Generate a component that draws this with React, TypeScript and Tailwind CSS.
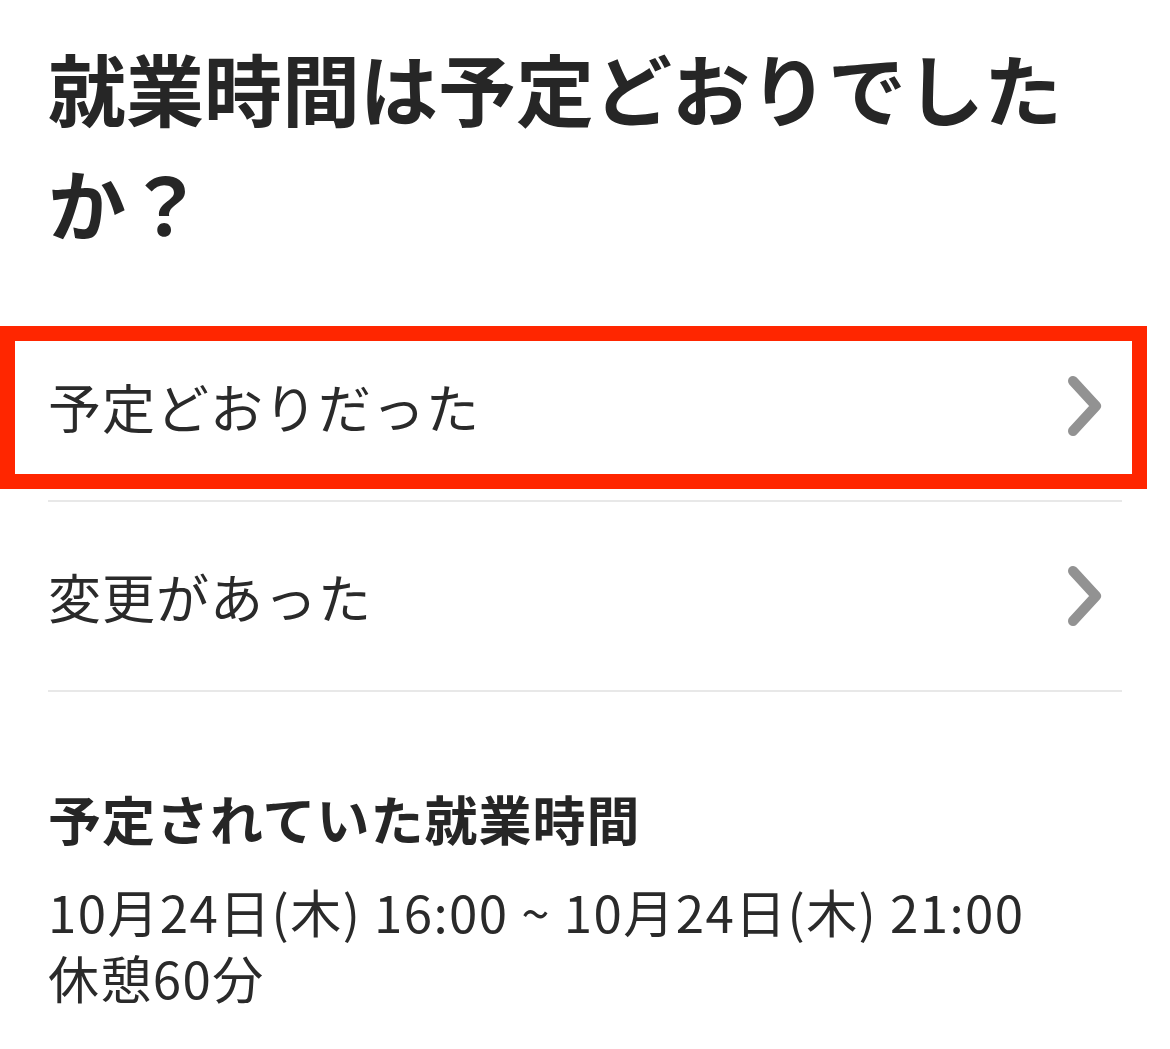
const jp = { fontFamily: '"Noto Sans CJK JP", "Noto Sans", sans-serif' }

function Chevron(): React.JSX.Element {
  return (
    <svg width="34" height="60" viewBox="0 0 34 60" fill="none" className="shrink-0">
      <path d="M5 5 L28 30 L5 55" stroke="#929292" strokeWidth="10" strokeLinecap="round" strokeLinejoin="round" />
    </svg>
  )
}

function OptionRow({ label }: { label: string }): React.JSX.Element {
  return (
    <button className="flex h-[190px] w-full items-center justify-between border-b-2 border-[#e8e8e8] pr-[20px] text-left">
      <span className="text-[53px] leading-none tracking-[1px] text-[#2a2a2a]">{label}</span>
      <Chevron />
    </button>
  )
}

export default function App(): React.JSX.Element {
  return (
    <div className="relative min-h-[1049px] w-[1170px] bg-white" style={jp}>
      <div className="pl-[48px] pr-[48px] pt-[30px]">
        <h1 className="text-[78px] font-bold leading-[115px] text-[#262626]">
          就業時間は予定どおりでしたか？
        </h1>

        <div className="mt-[52px]">
          <OptionRow label="予定どおりだった" />
          <OptionRow label="変更があった" />
        </div>

        <section className="mt-[86px]">
          <h2 className="text-[53px] font-bold leading-[80px] tracking-[1px] text-[#262626]">予定されていた就業時間</h2>
          <div className="mt-[20px] text-[51px] leading-[66px] tracking-[1.4px] text-[#2a2a2a]">
            <p>10月24日(木) 16:00 ~ 10月24日(木) 21:00</p>
            <p>休憩60分</p>
          </div>
        </section>
      </div>

      {/* annotation highlight over the first option */}
      <div className="pointer-events-none absolute left-0 top-[326px] h-[163px] w-[1147px] border-[15px] border-[#ff2600]" />
    </div>
  )
}
